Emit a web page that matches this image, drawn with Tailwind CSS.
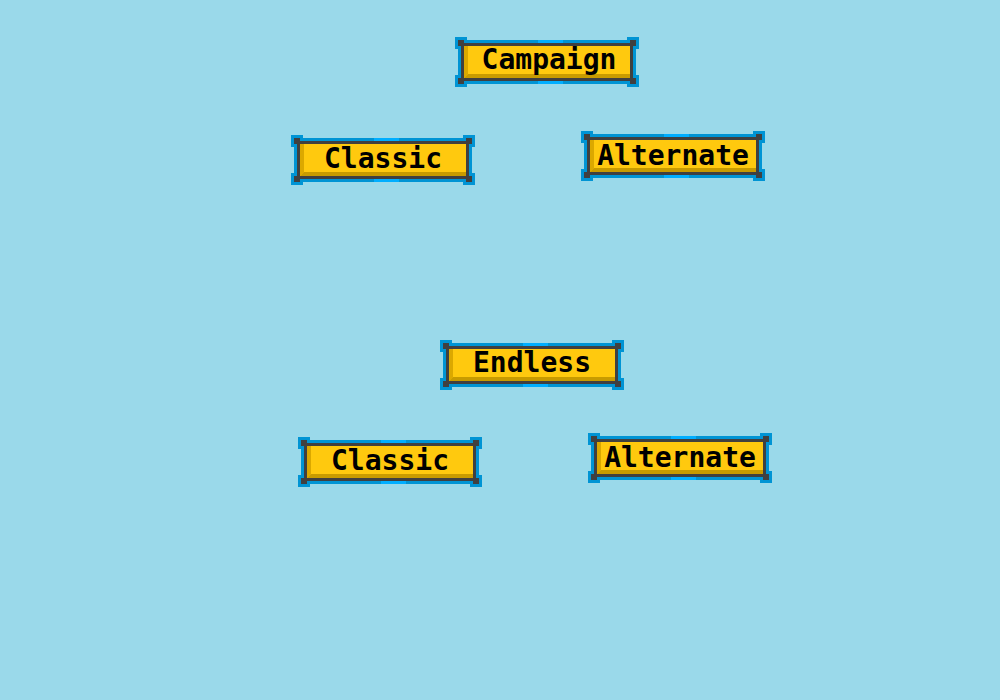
<!DOCTYPE html>
<html lang="en">
<head>
<meta charset="utf-8">
<meta name="viewport" content="width=device-width, initial-scale=1">
<title>Select mode</title>
<script src="https://cdn.jsdelivr.net/npm/@tailwindcss/browser@4"></script>
</head>
<body class="min-h-screen bg-[#9ad9ea] font-['DejaVu_Sans_Mono',monospace] text-[28px] leading-8 font-bold text-black">
<!-- Shared pixel frame for every button -->
<svg class="hidden" aria-hidden="true">
  <symbol id="frame" viewBox="0 0 184 50">
    <path fill="#0094d4" d="M0 0h12v3h160V0h12v12h-3v26h3v12h-12v-3H12v3H0V38h3V12H0z"/>
    <path fill="#00aeff" d="M83 3h25v3H83zM83 44h25v3H83z"/>
    <path fill="#404040" d="M3 3h6v3h166V3h6v6h-3v32h3v6h-6v-3H9v3H3v-6h3V9H3z"/>
    <path fill="#ffc90e" d="M9 9h166v32H9z"/>
    <path fill="#dba800" d="M9 9h4v28l-4 4z"/>
    <path fill="#c89b00" d="M9 41l4-4h162v4z"/>
  </symbol>
</svg>
<main class="flex flex-col gap-[155px] pt-[37px] pb-10">
  <section>
    <div class="flex justify-center pl-[94px]">
      <button type="button" class="relative h-[50px] w-[184px] shrink-0 cursor-pointer pb-1 pl-1">
        <svg class="absolute inset-0 size-full" shape-rendering="crispEdges" aria-hidden="true"><use href="#frame"/></svg>
        <span class="relative">Campaign</span>
      </button>
    </div>
    <div class="mt-11 flex items-start justify-center gap-[106px] pl-14">
      <button type="button" class="relative mt-1 h-[50px] w-[184px] shrink-0 cursor-pointer pb-0.5">
        <svg class="absolute inset-0 size-full" shape-rendering="crispEdges" aria-hidden="true"><use href="#frame"/></svg>
        <span class="relative">Classic</span>
      </button>
      <button type="button" class="relative h-[50px] w-[184px] shrink-0 cursor-pointer">
        <svg class="absolute inset-0 size-full" shape-rendering="crispEdges" aria-hidden="true"><use href="#frame"/></svg>
        <span class="relative">Alternate</span>
      </button>
    </div>
  </section>
  <section>
    <div class="flex justify-center pl-16">
      <button type="button" class="relative h-[50px] w-[184px] shrink-0 cursor-pointer pb-1">
        <svg class="absolute inset-0 size-full" shape-rendering="crispEdges" aria-hidden="true"><use href="#frame"/></svg>
        <span class="relative">Endless</span>
      </button>
    </div>
    <div class="mt-[43px] flex items-start justify-center gap-[106px] pl-[70px]">
      <button type="button" class="relative mt-1 h-[50px] w-[184px] shrink-0 cursor-pointer pb-0.5">
        <svg class="absolute inset-0 size-full" shape-rendering="crispEdges" aria-hidden="true"><use href="#frame"/></svg>
        <span class="relative">Classic</span>
      </button>
      <button type="button" class="relative h-[50px] w-[184px] shrink-0 cursor-pointer">
        <svg class="absolute inset-0 size-full" shape-rendering="crispEdges" aria-hidden="true"><use href="#frame"/></svg>
        <span class="relative">Alternate</span>
      </button>
    </div>
  </section>
</main>
</body>
</html>
